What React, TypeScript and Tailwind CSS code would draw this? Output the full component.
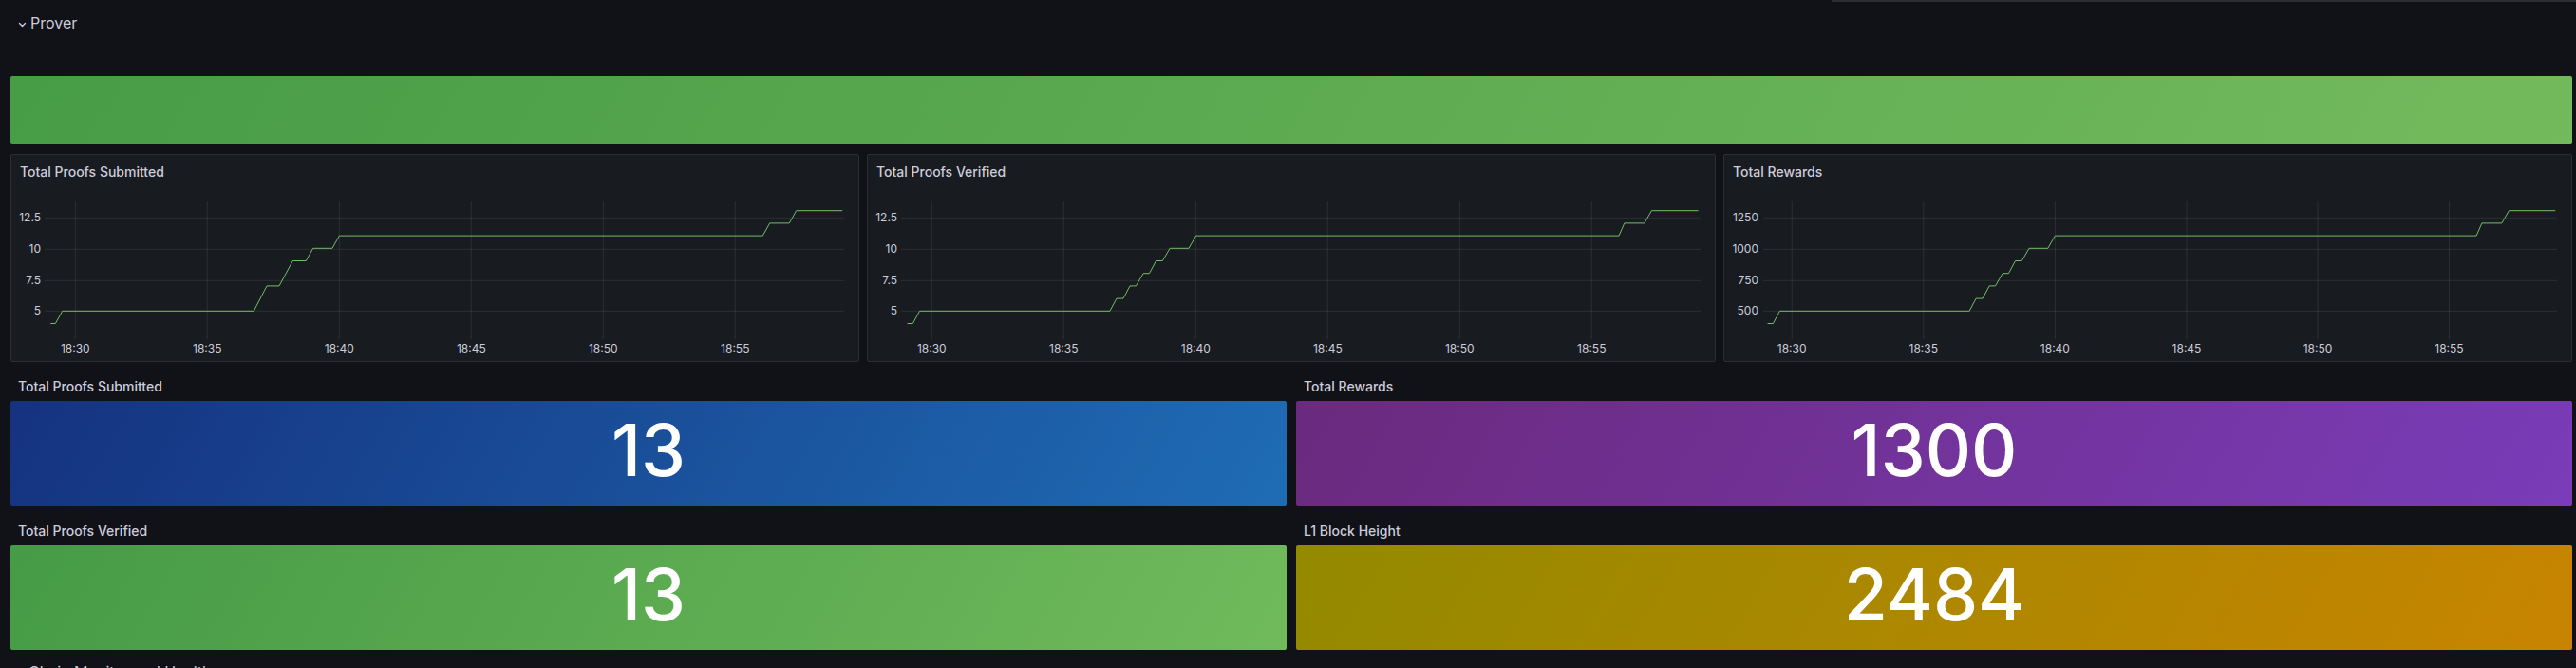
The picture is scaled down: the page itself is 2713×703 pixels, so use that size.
import React from "react";

type Pt = [number, number];

const FONT = "Inter, 'Noto Sans', 'Liberation Sans', sans-serif";

const xLabels = ["18:30", "18:35", "18:40", "18:45", "18:50", "18:55"];

function Chart(props: {
  title: string;
  yLabels: string[];
  labelRight: number;
  gridX1: number;
  gridX2: number;
  vx: number[];
  points: Pt[];
  toY: (v: number) => number;
}) {
  const { title, yLabels, labelRight, gridX1, gridX2, vx, points, toY } = props;
  const hy = [31.3, 64.3, 97.3, 129.3];
  const d = points
    .map((p, i) => `${i === 0 ? "M" : "L"}${p[0].toFixed(1)} ${toY(p[1]).toFixed(1)}`)
    .join(" ");
  return (
    <div className="flex-1 h-[219px] bg-[#181b1f] border border-[#2c2e33] rounded-[2px] flex flex-col overflow-hidden">
      <div className="h-[35px] pl-[9px] pt-[8px] text-[14px] leading-[20px] font-medium text-[#ccccdc]">
        {title}
      </div>
      <svg width="892" height="182" className="block">
        {hy.map((y) => (
          <line key={y} x1={gridX1} x2={gridX2} y1={y} y2={y} stroke="rgba(240,250,255,0.09)" strokeWidth="1" />
        ))}
        {vx.map((x) => (
          <line key={x} x1={x} x2={x} y1={14} y2={159} stroke="rgba(240,250,255,0.09)" strokeWidth="1" />
        ))}
        {yLabels.map((l, i) => (
          <text
            key={l}
            x={labelRight}
            y={hy[i] + 4}
            textAnchor="end"
            fontSize="12"
            fill="#ccccdc"
            fontFamily={FONT}
          >
            {l}
          </text>
        ))}
        {xLabels.map((l, i) => (
          <text
            key={l}
            x={vx[i]}
            y={173}
            textAnchor="middle"
            fontSize="12"
            fill="#ccccdc"
            fontFamily={FONT}
          >
            {l}
          </text>
        ))}
        <path d={d} fill="none" stroke="#73bf69" strokeWidth="1" strokeLinejoin="round" />
      </svg>
    </div>
  );
}

function Stat(props: { title: string; value: string; bg: string }) {
  return (
    <div className="flex-1 flex flex-col">
      <div className="h-[33px] pl-[8px] pt-[8px] text-[14px] leading-[20px] font-medium text-[#ccccdc]">
        {props.title}
      </div>
      <div
        className={`h-[110px] pb-[7px] rounded-[2px] flex items-center justify-center text-white text-[75px] leading-none font-medium ${props.bg}`}
      >
        {props.value}
      </div>
    </div>
  );
}

const p1: Pt[] = [
  [41.3, 4], [46.3, 4], [53.7, 5], [255.3, 5], [269, 7], [282, 7], [296.3, 9], [310.3, 9],
  [317.7, 10], [338, 10], [345.3, 11], [791.3, 11], [798.7, 12], [819.3, 12], [826.7, 13], [875.3, 13],
];

const p3: Pt[] = [
  [45.6, 400], [51.4, 400], [58.4, 500], [258.1, 500], [265.1, 600], [272.1, 600], [279.1, 700],
  [285.5, 700], [293.1, 800], [299.5, 800], [306.5, 900], [313.4, 900], [321, 1000], [340.8, 1000],
  [348.4, 1100], [792.1, 1100], [797.9, 1200], [818.9, 1200], [826.4, 1300], [875.3, 1300],
];

const p2: Pt[] = p3.map(([x, v]) => [67.3 + (x - 71.2) * 1.0039, v / 100]);

const vx1 = [67.3, 206.3, 345.3, 484.3, 623.3, 762.3];
const vx3 = [71.2, 209.8, 348.4, 487, 625, 763.5];

const ySmall = (v: number) => 129.3 - (v - 5) * 13.2;
const yBig = (v: number) => 129.3 - (v - 500) * 0.132;

export default function App() {
  return (
    <div
      className="w-[2713px] h-[703px] overflow-hidden bg-[#111217] text-[#ccccdc]"
      style={{ fontFamily: FONT }}
    >
      <div className="h-[2px] ml-[1929px] bg-[#2c2e33]" />
      <div className="h-[44px] flex items-center pl-[19px] gap-[4px]">
        <svg width="9" height="6" viewBox="0 0 9 6" className="mt-[3px]">
          <path d="M1.5 1.5 L4.5 4.5 L7.5 1.5" fill="none" stroke="#ccccdc" strokeWidth="1.4" strokeLinecap="round" strokeLinejoin="round" />
        </svg>
        <span className="text-[16px] leading-[22px] text-[#ccccdc]">Prover</span>
      </div>
      <div className="pl-[11px] pr-[4px] pt-[34px] flex flex-col">
        <div className="h-[72px] rounded-[2px] bg-[linear-gradient(120deg,#479c46,#73ba5c)]" />
        <div className="mt-[10px] flex gap-[8px]">
          <Chart
            title="Total Proofs Submitted"
            yLabels={["12.5", "10", "7.5", "5"]}
            labelRight={31}
            gridX1={35}
            gridX2={877}
            vx={vx1}
            points={p1}
            toY={ySmall}
          />
          <Chart
            title="Total Proofs Verified"
            yLabels={["12.5", "10", "7.5", "5"]}
            labelRight={31}
            gridX1={35}
            gridX2={877}
            vx={vx1}
            points={p2}
            toY={ySmall}
          />
          <Chart
            title="Total Rewards"
            yLabels={["1250", "1000", "750", "500"]}
            labelRight={36}
            gridX1={41}
            gridX2={877}
            vx={vx3}
            points={p3}
            toY={yBig}
          />
        </div>
        <div className="mt-[8px] flex gap-[10px]">
          <Stat title="Total Proofs Submitted" value="13" bg="bg-[linear-gradient(120deg,#15327f,#1f6cb5)]" />
          <Stat title="Total Rewards" value="1300" bg="bg-[linear-gradient(120deg,#6a2a7e,#7a3cb8)]" />
        </div>
        <div className="mt-[9px] flex gap-[10px]">
          <Stat title="Total Proofs Verified" value="13" bg="bg-[linear-gradient(120deg,#469b46,#70ba5b)]" />
          <Stat title="L1 Block Height" value="2484" bg="bg-[linear-gradient(120deg,#938a00,#c88400)]" />
        </div>
      </div>
      <div className="mt-[12px] pl-[19px] flex items-center gap-[5px]">
        <svg width="6" height="9" viewBox="0 0 6 9">
          <path d="M1.5 1.5 L4.5 4.5 L1.5 7.5" fill="none" stroke="#ccccdc" strokeWidth="1.4" strokeLinecap="round" strokeLinejoin="round" />
        </svg>
        <span className="text-[16px] leading-[22px]">Chain Monitor and Health</span>
      </div>
    </div>
  );
}
